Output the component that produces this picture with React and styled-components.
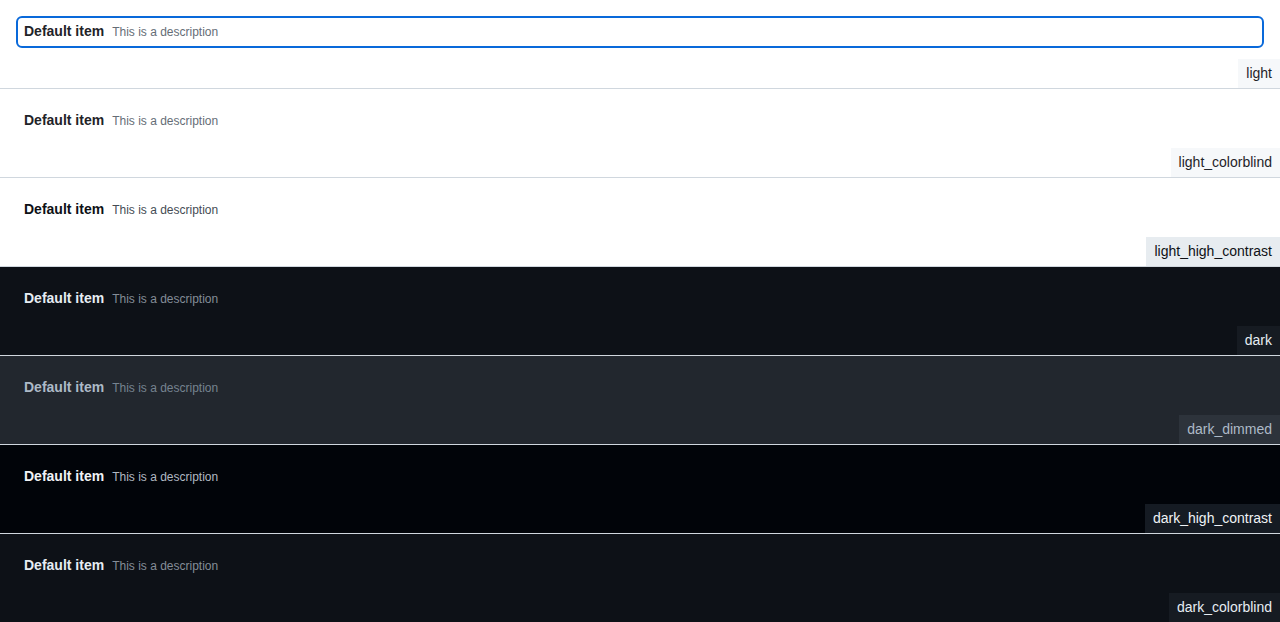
import { createGlobalStyle } from "styled-components";
import styled from "styled-components";

const GlobalStyle = createGlobalStyle`
  html, body {
    margin: 0;
    padding: 0;
    background: #ffffff;
  }
  body {
    font-family: "Liberation Sans", Arial, sans-serif;
  }
`;

const themes = [
  { name: "light", bg: "#ffffff", fg: "#1f2328", muted: "#656d76", subtle: "#f6f8fa" },
  { name: "light_colorblind", bg: "#ffffff", fg: "#1f2328", muted: "#656d76", subtle: "#f6f8fa" },
  { name: "light_high_contrast", bg: "#ffffff", fg: "#0e1116", muted: "#454c54", subtle: "#e7ecf0" },
  { name: "dark", bg: "#0d1117", fg: "#e6edf3", muted: "#848d97", subtle: "#161b22" },
  { name: "dark_dimmed", bg: "#22272e", fg: "#adbac7", muted: "#768390", subtle: "#2d333b" },
  { name: "dark_high_contrast", bg: "#010409", fg: "#f0f3f6", muted: "#b0b8c2", subtle: "#151b23" },
  { name: "dark_colorblind", bg: "#0d1117", fg: "#e6edf3", muted: "#848d97", subtle: "#161b22" },
];

const Panel = styled.section`
  box-sizing: border-box;
  height: 89px;
  display: flex;
  flex-direction: column;
  padding: 16px 16px 0;
  background: ${(p) => p.$theme.bg};
  color: ${(p) => p.$theme.fg};
  border-bottom: 1px solid #d0d7de;
  overflow: hidden;
`;

const Item = styled.div`
  box-sizing: border-box;
  height: 32px;
  display: flex;
  align-items: baseline;
  gap: 8px;
  padding: 5px 8px 7px;
  border-radius: 6px;
  outline: ${(p) => (p.$focused ? "2px solid #0969da" : "none")};
  outline-offset: -2px;
`;

const Label = styled.span`
  font-size: 14px;
  font-weight: 700;
  line-height: 20px;
`;

const Description = styled.span`
  font-size: 12px;
  line-height: 16px;
  color: ${(p) => p.$color};
`;

const ThemeTag = styled.div`
  margin-top: auto;
  margin-right: -16px;
  align-self: flex-end;
  padding: 4px 8px;
  font-size: 14px;
  line-height: 21px;
  background: ${(p) => p.$bg};
`;

export default function App() {
  return (
    <>
      <GlobalStyle />
      {themes.map((t, i) => (
        <Panel key={t.name} $theme={t}>
          <Item $focused={i === 0}>
            <Label>Default item</Label>
            <Description $color={t.muted}>This is a description</Description>
          </Item>
          <ThemeTag $bg={t.subtle}>{t.name}</ThemeTag>
        </Panel>
      ))}
    </>
  );
}
